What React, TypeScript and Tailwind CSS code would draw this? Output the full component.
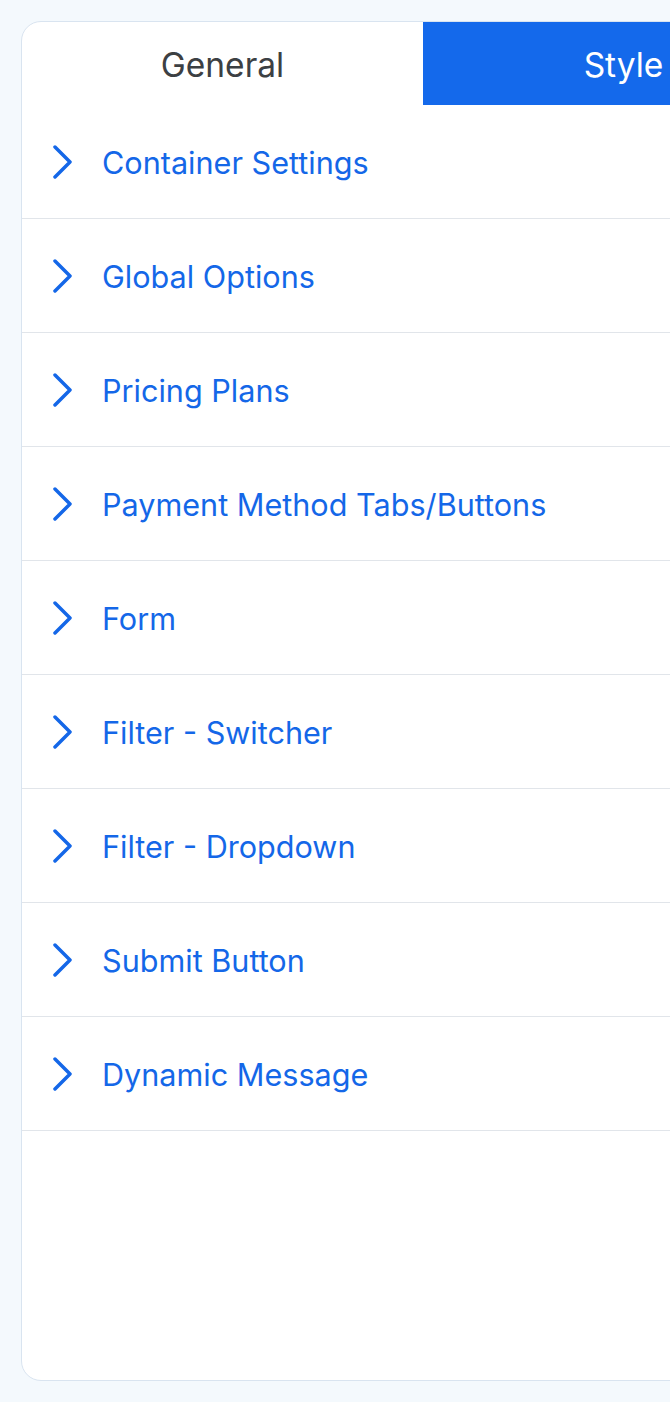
import React from "react";

const items = [
  "Container Settings",
  "Global Options",
  "Pricing Plans",
  "Payment Method Tabs/Buttons",
  "Form",
  "Filter - Switcher",
  "Filter - Dropdown",
  "Submit Button",
  "Dynamic Message",
];

function Chevron() {
  return (
    <svg width="22" height="34" viewBox="0 0 22 34" className="shrink-0">
      <path
        d="M3 2 L18 17 L3 32"
        fill="none"
        stroke="#1467e8"
        strokeWidth="3.5"
        strokeLinecap="round"
        strokeLinejoin="round"
      />
    </svg>
  );
}

export default function App() {
  return (
    <div
      className="w-[670px] h-[1402px] overflow-hidden bg-[#f4f9fd] pt-[21px] pl-[21px]"
      style={{ fontFamily: "Inter, 'Noto Sans', sans-serif" }}
    >
      <div className="w-[804px] h-[1360px] bg-white border border-[#d9e4f0] rounded-[20px] overflow-hidden flex flex-col">
        <div className="flex h-[83px] shrink-0">
          <div className="w-1/2 flex items-center justify-center pt-[3px] text-[33.5px] text-[#3c4043]">
            General
          </div>
          <div className="w-1/2 flex items-center justify-center pt-[3px] text-[33.5px] text-white bg-[#1469eb]">
            Style
          </div>
        </div>
        {items.map((t) => (
          <div
            key={t}
            className="h-[114px] shrink-0 border-b border-[#e1e5ea] flex items-center pl-[30px]"
          >
            <Chevron />
            <span className="ml-[28px] mt-[3px] text-[30.6px] text-[#1467e8]">{t}</span>
          </div>
        ))}
      </div>
    </div>
  );
}
